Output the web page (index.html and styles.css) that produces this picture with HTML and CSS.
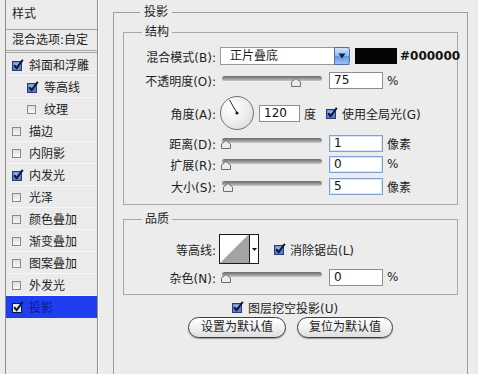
FILE: index.html
```html
<!DOCTYPE html>
<html lang="zh-CN">
<head>
<meta charset="utf-8">
<title>图层样式 - 投影</title>
<link rel="stylesheet" href="styles.css">
</head>
<body>
<div class="dialog">
  <aside class="styles-list">
    <div class="list-head">样式</div>
    <div class="list-blend">混合选项:自定</div>
    <ul class="fx">
      <li class="fx-item"><svg class="cb-on" width="12" height="12" viewBox="0 0 12 12"><rect x="0.5" y="2.5" width="9" height="9" fill="#5b7fcf" stroke="#2b3a70"/><rect x="1.5" y="3.5" width="7" height="3" fill="#8eaae6"/><path d="M2.2 6.2 L4.6 9.2 L10.8 0.8" fill="none" stroke="#0d1736" stroke-width="2"/></svg>斜面和浮雕</li>
      <li class="fx-item sub"><svg class="cb-on" width="12" height="12" viewBox="0 0 12 12"><rect x="0.5" y="2.5" width="9" height="9" fill="#5b7fcf" stroke="#2b3a70"/><rect x="1.5" y="3.5" width="7" height="3" fill="#8eaae6"/><path d="M2.2 6.2 L4.6 9.2 L10.8 0.8" fill="none" stroke="#0d1736" stroke-width="2"/></svg>等高线</li>
      <li class="fx-item sub"><span class="cb"></span>纹理</li>
      <li class="fx-item"><span class="cb"></span>描边</li>
      <li class="fx-item"><span class="cb"></span>内阴影</li>
      <li class="fx-item"><svg class="cb-on" width="12" height="12" viewBox="0 0 12 12"><rect x="0.5" y="2.5" width="9" height="9" fill="#5b7fcf" stroke="#2b3a70"/><rect x="1.5" y="3.5" width="7" height="3" fill="#8eaae6"/><path d="M2.2 6.2 L4.6 9.2 L10.8 0.8" fill="none" stroke="#0d1736" stroke-width="2"/></svg>内发光</li>
      <li class="fx-item"><span class="cb"></span>光泽</li>
      <li class="fx-item"><span class="cb"></span>颜色叠加</li>
      <li class="fx-item"><span class="cb"></span>渐变叠加</li>
      <li class="fx-item"><span class="cb"></span>图案叠加</li>
      <li class="fx-item"><span class="cb"></span>外发光</li>
      <li class="fx-item sel"><svg class="cb-on" width="12" height="12" viewBox="0 0 12 12"><rect x="0.5" y="2.5" width="9" height="9" fill="#dfe6f8" stroke="#0d1736"/><path d="M2.2 6.2 L4.6 9.2 L10.8 0.8" fill="none" stroke="#0d1736" stroke-width="2"/></svg>投影</li>
    </ul>
  </aside>

  <fieldset class="group outer">
    <legend>投影</legend>

    <fieldset class="group inner struct">
      <legend>结构</legend>

      <div class="row row-mode">
        <label class="lbl">混合模式(B):</label>
        <div class="select">
          <span class="select-text">正片叠底</span>
          <span class="select-btn"><svg width="8" height="6" viewBox="0 0 8 6"><path d="M0.5 0.5 H7.5 L4 5.5 Z" fill="#10204a"/></svg></span>
        </div>
        <span class="swatch"></span>
        <span class="hex">#000000</span>
      </div>

      <div class="row row-opacity">
        <label class="lbl">不透明度(O):</label>
        <div class="slider"><div class="track"></div><span class="thumb" style="left:71px"><svg width="10" height="9" viewBox="0 0 10 9"><path d="M0.5 4 L5 0.5 L9.5 4 V8.5 H0.5 Z" fill="#ececec" stroke="#6e6e6e"/></svg></span></div>
        <span class="num">75</span>
        <span class="unit">%</span>
      </div>

      <div class="row row-angle">
        <label class="lbl">角度(A):</label>
        <div class="dial"><svg width="34" height="34" viewBox="0 0 34 34"><line x1="17" y1="17" x2="9.5" y2="4" stroke="#2a2a2a" stroke-width="1"/><circle cx="17" cy="17" r="1.6" fill="#1a1a1a"/></svg></div>
        <span class="num num-angle">120</span>
        <span class="unit">度</span>
        <svg class="cb-on gl" width="12" height="12" viewBox="0 0 12 12"><rect x="0.5" y="2.5" width="9" height="9" fill="#5b7fcf" stroke="#2b3a70"/><rect x="1.5" y="3.5" width="7" height="3" fill="#8eaae6"/><path d="M2.2 6.2 L4.6 9.2 L10.8 0.8" fill="none" stroke="#0d1736" stroke-width="2"/></svg>
        <span class="cb-text">使用全局光(G)</span>
      </div>

      <div class="row row-dist">
        <label class="lbl">距离(D):</label>
        <div class="slider"><div class="track"></div><span class="thumb" style="left:1px"><svg width="10" height="9" viewBox="0 0 10 9"><path d="M0.5 4 L5 0.5 L9.5 4 V8.5 H0.5 Z" fill="#ececec" stroke="#6e6e6e"/></svg></span></div>
        <span class="num num-focus">1</span>
        <span class="unit">像素</span>
      </div>

      <div class="row row-spread">
        <label class="lbl">扩展(R):</label>
        <div class="slider"><div class="track"></div><span class="thumb" style="left:1px"><svg width="10" height="9" viewBox="0 0 10 9"><path d="M0.5 4 L5 0.5 L9.5 4 V8.5 H0.5 Z" fill="#ececec" stroke="#6e6e6e"/></svg></span></div>
        <span class="num num-focus">0</span>
        <span class="unit">%</span>
      </div>

      <div class="row row-size">
        <label class="lbl">大小(S):</label>
        <div class="slider"><div class="track"></div><span class="thumb" style="left:3px"><svg width="10" height="9" viewBox="0 0 10 9"><path d="M0.5 4 L5 0.5 L9.5 4 V8.5 H0.5 Z" fill="#ececec" stroke="#6e6e6e"/></svg></span></div>
        <span class="num num-focus">5</span>
        <span class="unit">像素</span>
      </div>
    </fieldset>

    <fieldset class="group inner quality">
      <legend>品质</legend>

      <div class="row row-contour">
        <label class="lbl">等高线:</label>
        <div class="contour">
          <span class="contour-preview"><svg width="29" height="28" viewBox="0 0 29 28"><polygon points="0,28 28,0 29,0 29,28" fill="#a3a3a3"/></svg></span>
          <span class="contour-drop"><svg width="5" height="3" viewBox="0 0 5 3"><path d="M0 0 H5 L2.5 3 Z" fill="#111"/></svg></span>
        </div>
        <svg class="cb-on aa" width="12" height="12" viewBox="0 0 12 12"><rect x="0.5" y="2.5" width="9" height="9" fill="#5b7fcf" stroke="#2b3a70"/><rect x="1.5" y="3.5" width="7" height="3" fill="#8eaae6"/><path d="M2.2 6.2 L4.6 9.2 L10.8 0.8" fill="none" stroke="#0d1736" stroke-width="2"/></svg>
        <span class="cb-text">消除锯齿(L)</span>
      </div>

      <div class="row row-noise">
        <label class="lbl">杂色(N):</label>
        <div class="slider"><div class="track"></div><span class="thumb" style="left:1px"><svg width="10" height="9" viewBox="0 0 10 9"><path d="M0.5 4 L5 0.5 L9.5 4 V8.5 H0.5 Z" fill="#ececec" stroke="#6e6e6e"/></svg></span></div>
        <span class="num">0</span>
        <span class="unit">%</span>
      </div>
    </fieldset>

    <div class="knockout">
      <svg class="cb-on" width="12" height="12" viewBox="0 0 12 12"><rect x="0.5" y="2.5" width="9" height="9" fill="#5b7fcf" stroke="#2b3a70"/><rect x="1.5" y="3.5" width="7" height="3" fill="#8eaae6"/><path d="M2.2 6.2 L4.6 9.2 L10.8 0.8" fill="none" stroke="#0d1736" stroke-width="2"/></svg>
      <span class="cb-text">图层挖空投影(U)</span>
    </div>

    <div class="buttons">
      <button class="pill pill-set">设置为默认值</button>
      <button class="pill pill-reset">复位为默认值</button>
    </div>
  </fieldset>
</div>
</body>
</html>
```

FILE: styles.css
```css
html, body {
  margin: 0;
  padding: 0;
}

body {
  width: 478px;
  height: 374px;
  overflow: hidden;
  background: #ececec;
  color: #1e1e1e;
  font-family: "DejaVu Sans", "Noto Sans CJK SC", sans-serif;
  font-size: 12px;
}

.dialog {
  display: flex;
  align-items: flex-start;
  height: 374px;
}

/* ---------- left list ---------- */
.styles-list {
  flex: none;
  margin-left: 5px;
  width: 91px;
  height: 374px;
  box-sizing: content-box;
  border: 1px solid #8e8e8e;
  border-top: none;
  border-bottom: none;
  box-shadow: 1px 0 0 #fbfbfb;
  background: #ebebeb;
}

.list-head {
  height: 29px;
  line-height: 29px;
  padding-left: 6px;
  border-bottom: 1px solid #a6a6a6;
}

.list-blend {
  height: 20px;
  line-height: 20px;
  padding-left: 6px;
  border-bottom: 3px double #a6a6a6;
  white-space: nowrap;
}

.fx {
  list-style: none;
  margin: 0;
  padding: 1px 0 0;
}

.fx-item {
  display: flex;
  align-items: center;
  gap: 5px;
  height: 21px;
  padding-left: 6px;
  border-bottom: 1px solid #f7f7f7;
  white-space: nowrap;
}

.fx-item.sub {
  padding-left: 21px;
}

.fx-item.sel {
  background: #1f3ef0;
  color: #0e1c8c;
  border-bottom-color: #1f3ef0;
}

.cb {
  flex: none;
  display: inline-block;
  box-sizing: border-box;
  width: 9px;
  height: 9px;
  margin: 2px 3px 0 0;
  border: 1px solid #8a8a8a;
  background: linear-gradient(#dedede, #f8f8f8);
}

.cb-on {
  flex: none;
  display: block;
}

/* ---------- fieldsets ---------- */
.group {
  margin: 0;
  min-width: 0;
  box-sizing: border-box;
}

.group > legend {
  padding: 0 4px;
  line-height: 16px;
  font-size: 12px;
}

.outer {
  flex: none;
  width: 355px;
  height: 370px;
  margin: 4px 0 0 15px;
  padding: 4px 9px 0;
  border: 1px solid #9c9c9c;
  border-bottom: none;
}

.outer > legend {
  margin-left: 17px;
}

.inner {
  width: 100%;
  padding: 5px 0 8px;
  border: 1px solid #a8a8a8;
}

.inner > legend {
  margin-left: 18px;
  padding: 0 3px;
}

.quality {
  margin-top: 6px;
  padding: 7px 0 7px;
}

/* ---------- rows ---------- */
.row {
  display: flex;
  align-items: center;
  height: 20px;
  margin-top: 2px;
  white-space: nowrap;
}

.row-mode { height: 22px; margin-top: 0; }
.row-opacity { height: 21px; margin-top: 3px; }
.row-angle { height: 34px; margin-top: 5px; }
.row-dist { margin-top: 3px; }
.row-spread { margin-top: 1px; }
.row-size { margin-top: 2px; }
.row-contour { height: 30px; margin-top: 0; }
.row-noise { margin-top: 3px; }

.lbl {
  flex: none;
  width: 92px;
  margin-right: 4px;
  text-align: right;
}

/* select */
.select {
  flex: none;
  display: flex;
  width: 130px;
  height: 18px;
  box-sizing: border-box;
  border: 1px solid #9a9a9a;
  border-right: none;
  background: #fff;
}

.select-text {
  flex: 1;
  padding-left: 9px;
  line-height: 16px;
}

.select-btn {
  flex: none;
  display: flex;
  align-items: center;
  justify-content: center;
  width: 16px;
  margin: -1px 0;
  box-sizing: border-box;
  border: 1px solid #4f6fa8;
  border-radius: 0 3px 3px 0;
  background: linear-gradient(#d4e4fa, #8fb6ec 50%, #5f95e0 51%, #9cc4f4);
}

.swatch {
  flex: none;
  width: 42px;
  height: 16px;
  margin-left: 5px;
  background: #050505;
}

.hex {
  margin-left: 3px;
  font-weight: bold;
  font-size: 12px;
  color: #111;
}

/* slider */
.slider {
  position: relative;
  flex: none;
  width: 104px;
  height: 20px;
}

.track {
  height: 5px;
  margin: 5px 2px 0;
  border-radius: 3px;
  background: linear-gradient(#6a6a6a, #959595 50%, #c9c9c9);
}

.thumb {
  position: absolute;
  top: 7px;
  width: 10px;
  height: 9px;
}

.thumb svg {
  display: block;
}

/* numeric inputs */
.num {
  flex: none;
  display: block;
  box-sizing: border-box;
  width: 54px;
  height: 17px;
  margin-left: 5px;
  padding-left: 4px;
  line-height: 15px;
  border: 1px solid #8e8e8e;
  background: #fff;
  color: #111;
}

.num-angle {
  width: 41px;
}

.num-focus {
  border-color: #7ea3d0;
  box-shadow: inset 0 0 0 1px #d5e4f6;
}

.unit {
  margin-left: 4px;
}

/* dial */
.dial {
  flex: none;
  width: 34px;
  height: 34px;
  box-sizing: border-box;
  border: 1px solid #707070;
  border-radius: 50%;
  background: radial-gradient(circle at 35% 35%, #ffffff, #ececec 55%, #d2d2d2);
  overflow: hidden;
}

.dial svg {
  display: block;
  margin: -1px;
}

.gl {
  margin-left: 10px;
}

.cb-text {
  margin-left: 4px;
}

/* contour */
.contour {
  flex: none;
  display: flex;
  width: 40px;
  height: 30px;
  margin-left: -1px;
  box-sizing: border-box;
  border: 1px solid #1a1a1a;
  background: #fff;
}

.contour-preview {
  width: 29px;
  height: 28px;
}

.contour-preview svg {
  display: block;
}

.contour-drop {
  flex: 1;
  display: flex;
  align-items: center;
  justify-content: center;
  border-left: 1px solid #1a1a1a;
}

.aa {
  margin-left: 15px;
}

/* bottom */
.knockout {
  display: flex;
  align-items: center;
  height: 20px;
  margin-top: 2px;
  padding-left: 109px;
  white-space: nowrap;
}

.buttons {
  display: flex;
  justify-content: center;
  gap: 11px;
}

.pill {
  height: 21px;
  padding: 0;
  border: 1px solid #3e3e3e;
  border-radius: 11px;
  background: linear-gradient(#ffffff, #f1f1f1 50%, #dedede);
  box-shadow: 0 1px 1px rgba(0, 0, 0, 0.35);
  color: #222;
  font-family: "DejaVu Sans", "Noto Sans CJK SC", sans-serif;
  font-size: 12px;
  line-height: 19px;
}

.pill-set { width: 98px; }
.pill-reset { width: 96px; }
```
